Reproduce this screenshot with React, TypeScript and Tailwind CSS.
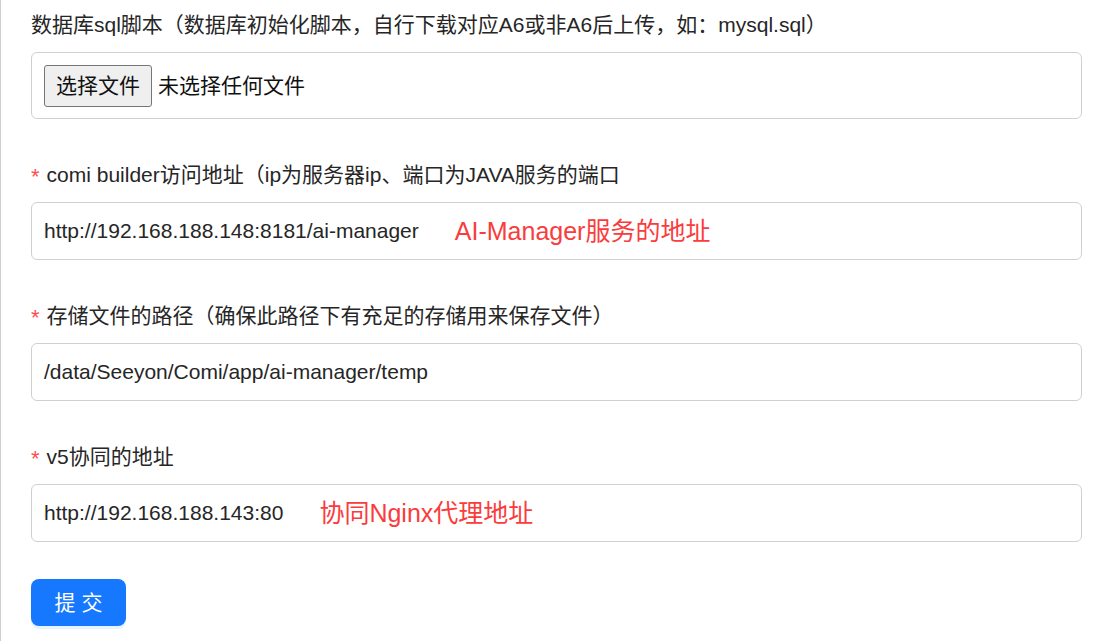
const font = { fontFamily: '"Liberation Sans", "Noto Sans CJK SC", sans-serif' };

type Field = {
  label: string;
  required?: boolean;
  value: string;
  note?: string;
};

const fields: Field[] = [
  {
    label: 'comi builder访问地址（ip为服务器ip、端口为JAVA服务的端口',
    required: true,
    value: 'http://192.168.188.148:8181/ai-manager',
    note: 'AI-Manager服务的地址',
  },
  {
    label: '存储文件的路径（确保此路径下有充足的存储用来保存文件）',
    required: true,
    value: '/data/Seeyon/Comi/app/ai-manager/temp',
  },
  {
    label: 'v5协同的地址',
    required: true,
    value: 'http://192.168.188.143:80',
    note: '协同Nginx代理地址',
  },
];

const FieldLabel = ({ text, required }: { text: string; required?: boolean }) => (
  <div className="flex items-center h-[28px] text-[21px] text-[#262626] whitespace-nowrap">
    {required && <span className="text-[#ff4d4f] text-[22px] mr-[7px] mt-[3px]">*</span>}
    <span>{text}</span>
  </div>
);

export default function App() {
  return (
    <div
      className="min-h-screen bg-white border-l border-[#cfcfcf] pl-[30px] pr-[29px] pt-[11px]"
      style={font}
    >
      {/* sql upload */}
      <div>
        <FieldLabel text="数据库sql脚本（数据库初始化脚本，自行下载对应A6或非A6后上传，如：mysql.sql）" />
        <div className="mt-[13px] h-[67px] flex items-center px-[12px] border border-[#d0d0d0] rounded-[6px]">
          <button className="h-[42px] w-[108px] bg-[#efefef] border border-[#767676] rounded-[3px] text-[21px] text-[#111]">
            选择文件
          </button>
          <span className="ml-[6px] text-[21px] text-[#111]">未选择任何文件</span>
        </div>
      </div>

      {fields.map((f) => (
        <div key={f.label} className="mt-[42px]">
          <FieldLabel text={f.label} required={f.required} />
          <div className="mt-[13px] h-[58px] flex items-center px-[12px] border border-[#d0d0d0] rounded-[6px]">
            <span className="text-[21px] text-[#262626] whitespace-nowrap">{f.value}</span>
            {f.note && (
              <span className="ml-[36px] mt-[2px] text-[25px] text-[#fa3c3c] whitespace-nowrap">{f.note}</span>
            )}
          </div>
        </div>
      ))}

      <button className="mt-[37px] h-[47px] w-[95px] rounded-[8px] bg-[#1677ff] text-white text-[21px] shadow-[0_3px_0_rgba(5,145,255,0.1)]">
        提 交
      </button>
    </div>
  );
}
